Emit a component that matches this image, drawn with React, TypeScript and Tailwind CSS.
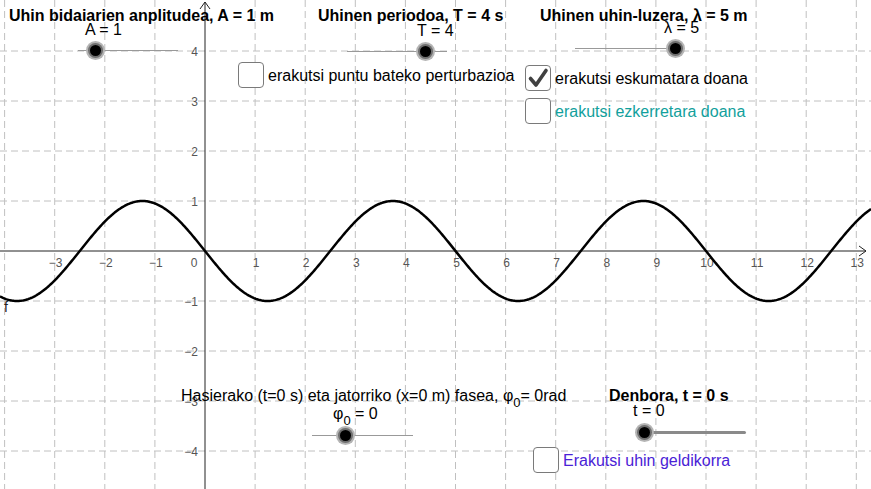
import React from "react";

const OX = 205;
const OY = 251;
const SX = 50.1;
const SY = 50;

function px(x: number) {
  return OX + x * SX;
}
function py(y: number) {
  return OY - y * SY;
}

function Graph() {
  const vLines: number[] = [];
  for (let k = -4; k <= 13; k++) vLines.push(k);
  const hLines: number[] = [];
  for (let k = -4; k <= 4; k++) hLines.push(k);
  let d = "";
  for (let p = 0; p <= 871; p += 1) {
    const xv = (p - OX) / SX;
    const yv = -Math.sin((2 * Math.PI * xv) / 5);
    d += (p === 0 ? "M" : "L") + p + " " + py(yv).toFixed(2) + " ";
  }
  const xLabels = [-3, -2, -1, 1, 2, 3, 4, 5, 6, 7, 8, 9, 10, 11, 12, 13];
  const yLabels = [4, 3, 2, 1, -1, -2, -3, -4];
  const fmt = (n: number) => (n < 0 ? "\u2212" + Math.abs(n) : String(n));
  return (
    <svg className="absolute left-0 top-0" width={871} height={489} viewBox="0 0 871 489">
      {vLines.map((k) =>
        k === 0 ? null : (
          <line key={"v" + k} x1={px(k)} y1={0} x2={px(k)} y2={489} stroke="#c0c0c0" strokeWidth={1} strokeDasharray="7 4" />
        )
      )}
      {hLines.map((k) =>
        k === 0 ? null : (
          <line key={"h" + k} x1={0} y1={py(k)} x2={871} y2={py(k)} stroke="#c0c0c0" strokeWidth={1} strokeDasharray="7 4" />
        )
      )}
      <line x1={0} y1={OY} x2={866} y2={OY} stroke="#222" strokeWidth={1} />
      <polyline points="859,246 866,251 859,256" fill="none" stroke="#222" strokeWidth={1} />
      <line x1={OX} y1={2} x2={OX} y2={489} stroke="#222" strokeWidth={1} />
      <polyline points="200,9 205,2 210,9" fill="none" stroke="#222" strokeWidth={1} />
      {xLabels.map((k) => (
        <text key={"xl" + k} x={px(k) + 1} y={267} textAnchor="middle" fontFamily="'Liberation Sans', Arial, sans-serif" fontSize={12} fill="#555">
          {fmt(k)}
        </text>
      ))}
      <text x={194} y={267} textAnchor="middle" fontFamily="'Liberation Sans', Arial, sans-serif" fontSize={12} fill="#555">
        0
      </text>
      {yLabels.map((k) => (
        <text key={"yl" + k} x={198} y={py(k) + 4.5} textAnchor="end" fontFamily="'Liberation Sans', Arial, sans-serif" fontSize={12} fill="#555">
          {fmt(k)}
        </text>
      ))}
      <path d={d} fill="none" stroke="#000" strokeWidth={2.5} strokeLinejoin="round" />
      <text x={4} y={312} fontFamily="'Liberation Sans', Arial, sans-serif" fontSize={14} fill="#222">
        f
      </text>
    </svg>
  );
}

function Knob({ className }: { className: string }) {
  return (
    <div className={"absolute flex h-[19px] w-[19px] items-center justify-center rounded-full bg-[#b4b4b4] " + className}>
      <div className="flex h-[15px] w-[15px] items-center justify-center rounded-full bg-[#6e6e6e]">
        <div className="h-[11px] w-[11px] rounded-full bg-black" />
      </div>
    </div>
  );
}

function Box({ checked }: { checked?: boolean }) {
  return (
    <div className="relative h-[26px] w-[26px] shrink-0 rounded-[4px] border-[1.5px] border-[#7a7a7a] bg-white">
      {checked && (
        <svg width={24} height={24} viewBox="0 0 24 24" className="absolute left-0 top-0">
          <polyline points="4.5,12.5 10,19 20,4.5" fill="none" stroke="#404040" strokeWidth={3.6} strokeLinecap="round" strokeLinejoin="round" />
        </svg>
      )}
    </div>
  );
}

function Check({ label, checked, textClass }: { label: string; checked?: boolean; textClass?: string }) {
  return (
    <div className="flex items-center gap-[4px]">
      <Box checked={checked} />
      <span className={"mt-[2px] whitespace-nowrap " + (textClass ?? "")}>{label}</span>
    </div>
  );
}

export default function App() {
  return (
    <div className="relative h-[489px] w-[871px] overflow-hidden bg-white font-['Liberation_Sans',Arial,sans-serif] text-[16px] leading-[16px] text-black">
      <Graph />

      {/* Amplitude */}
      <div className="absolute left-[9px] top-[8px] whitespace-nowrap font-bold">Uhin bidaiarien anplitudea, A = 1 m</div>
      <div className="absolute left-[85px] top-[22px] whitespace-nowrap">A = 1</div>
      <div className="absolute left-[78px] top-[50px] h-px w-[100px] bg-[#999]" />
      <Knob className="left-[86px] top-[41px]" />

      {/* Period */}
      <div className="absolute left-[318px] top-[8px] whitespace-nowrap font-bold">Uhinen periodoa, T = 4 s</div>
      <div className="absolute left-[417px] top-[23px] whitespace-nowrap">T = 4</div>
      <div className="absolute left-[347px] top-[51px] h-px w-[100px] bg-[#999]" />
      <Knob className="left-[416px] top-[42px]" />

      {/* Wavelength */}
      <div className="absolute left-[575px] top-[48px] h-px w-[100px] bg-[#999]" />
      <div className="absolute left-[540px] top-[8px] whitespace-nowrap font-bold">Uhinen uhin-luzera, λ = 5 m</div>
      <div className="absolute left-[664px] top-[20px] whitespace-nowrap">λ = 5</div>
      <Knob className="left-[666px] top-[39px]" />

      {/* Checkboxes */}
      <div className="absolute left-[238px] top-[62px]">
        <Check label="erakutsi puntu bateko perturbazioa" />
      </div>
      <div className="absolute left-[525px] top-[65px] flex flex-col gap-[7px]">
        <Check label="erakutsi eskumatara doana" checked />
        <Check label="erakutsi ezkerretara doana" textClass="text-[#12a09c]" />
      </div>

      {/* Phase */}
      <div className="absolute left-[181px] top-[388px] whitespace-nowrap">
        Hasierako (t=0 s) eta jatorriko (x=0 m) fasea, φ<span className="relative top-[6px] text-[13px]">0</span>= 0rad
      </div>
      <div className="absolute left-[333px] top-[406px] whitespace-nowrap">
        φ<span className="relative top-[6px] text-[13px]">0</span> = 0
      </div>
      <div className="absolute left-[312px] top-[435px] h-px w-[101px] bg-[#999]" />
      <Knob className="left-[336px] top-[426px]" />

      {/* Time */}
      <div className="absolute left-[609px] top-[388px] whitespace-nowrap font-bold">Denbora, t = 0 s</div>
      <div className="absolute left-[633px] top-[403px] whitespace-nowrap">t = 0</div>
      <div className="absolute left-[645px] top-[431px] h-[3px] w-[101px] rounded-full bg-[#8a8a8a]" />
      <Knob className="left-[635px] top-[423px]" />

      <div className="absolute left-[533px] top-[447px]">
        <Check label="Erakutsi uhin geldikorra" textClass="text-[#4a22d6]" />
      </div>
    </div>
  );
}
